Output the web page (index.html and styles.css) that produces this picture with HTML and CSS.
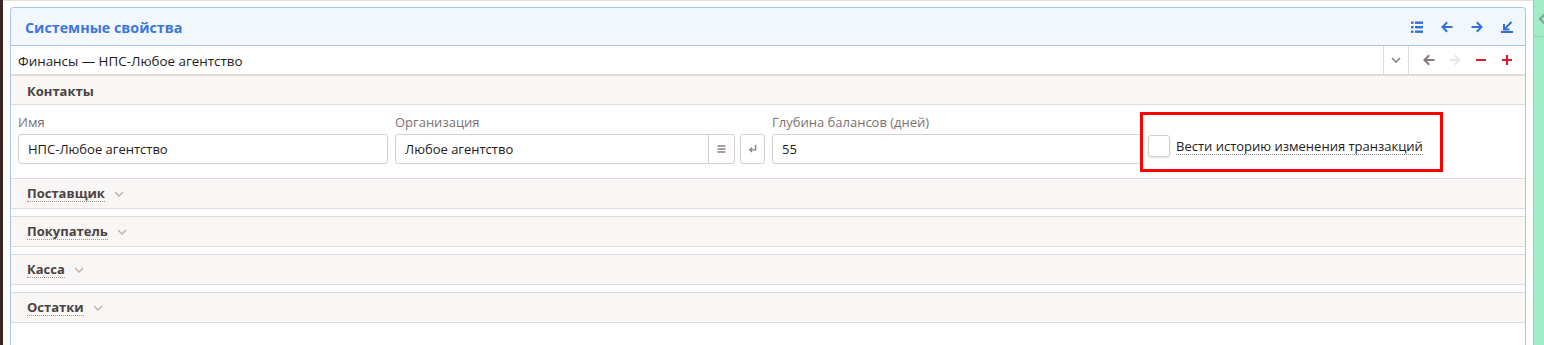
FILE: index.html
```html
<!DOCTYPE html>
<html lang="ru">
<head>
<meta charset="utf-8">
<title>Системные свойства</title>
<link rel="stylesheet" href="styles.css">
</head>
<body>
<div class="screen">
  <div class="edge"></div>
  <div class="workspace">
    <div class="panel">
      <div class="panel-head">
        <h1 class="panel-title">Системные свойства</h1>
        <div class="head-tools">
          <svg class="ico blue" viewBox="0 0 12 12"><rect x="0" y="0.5" width="2.5" height="2.4"/><rect x="4" y="0.5" width="8" height="2.4"/><rect x="0" y="5" width="2.5" height="2.4"/><rect x="4" y="5" width="8" height="2.4"/><rect x="0" y="9.5" width="2.5" height="2.4"/><rect x="4" y="9.5" width="8" height="2.4"/></svg>
          <svg class="ico blue-s" viewBox="0 0 12 12"><path d="M11.5 6H1.5M6.2 1.3 1.5 6l4.7 4.7"/></svg>
          <svg class="ico blue-s" viewBox="0 0 12 12"><path d="M0.5 6h10M5.8 1.3 10.5 6l-4.7 4.7"/></svg>
          <svg class="ico blue-s" viewBox="0 0 12 12"><path d="M10.5 1 3 8.5M3 3v5.5h5.5M0 11h12"/></svg>
        </div>
      </div>

      <div class="record-bar">
        <div class="record-name">Финансы — НПС-Любое агентство</div>
        <div class="rb-drop">
          <svg class="chev" viewBox="0 0 10 6"><path d="M1 1l4 4 4-4"/></svg>
        </div>
        <div class="rb-nav">
          <svg class="ico gray-s" viewBox="0 0 12 12"><path d="M11.5 6H1.5M6.2 1.3 1.5 6l4.7 4.7"/></svg>
          <svg class="ico faint-s" viewBox="0 0 12 12"><path d="M0.5 6h10M5.8 1.3 10.5 6l-4.7 4.7"/></svg>
          <svg class="ico red-s" viewBox="0 0 12 12"><path d="M1 6h10"/></svg>
          <svg class="ico red-s" viewBox="0 0 12 12"><path d="M1 6h10M6 1v10"/></svg>
        </div>
      </div>

      <div class="group group-open">
        <div class="group-head"><span class="group-title plain">Контакты</span></div>
        <div class="form">
          <div class="field">
            <label class="field-label">Имя</label>
            <div class="input"><span>НПС-Любое агентство</span></div>
          </div>
          <div class="field">
            <label class="field-label">Организация</label>
            <div class="field-row">
              <div class="input input-grow">
                <span>Любое агентство</span>
                <span class="input-addon">
                  <svg class="mini" viewBox="0 0 8 8"><path d="M0 1h8M0 4h8M0 7h8"/></svg>
                </span>
              </div>
              <div class="btn-sq">
                <svg class="mini" viewBox="0 0 10 9"><path d="M8.5 0v5.5H2M4.5 3 2 5.5 4.5 8"/></svg>
              </div>
            </div>
          </div>
          <div class="field">
            <label class="field-label">Глубина балансов (дней)</label>
            <div class="input"><span>55</span></div>
          </div>
          <div class="field field-check">
            <div class="check-row">
              <span class="checkbox"></span>
              <span class="check-label">Вести историю изменения транзакций</span>
            </div>
          </div>
          <div class="highlight"></div>
        </div>
      </div>

      <div class="group group-closed first">
        <div class="group-head"><span class="group-title">Поставщик</span><svg class="sec-chev" viewBox="0 0 10 6"><path d="M1 1l4 4 4-4"/></svg></div>
      </div>
      <div class="group group-closed">
        <div class="group-head"><span class="group-title">Покупатель</span><svg class="sec-chev" viewBox="0 0 10 6"><path d="M1 1l4 4 4-4"/></svg></div>
      </div>
      <div class="group group-closed">
        <div class="group-head"><span class="group-title">Касса</span><svg class="sec-chev" viewBox="0 0 10 6"><path d="M1 1l4 4 4-4"/></svg></div>
      </div>
      <div class="group group-closed">
        <div class="group-head"><span class="group-title">Остатки</span><svg class="sec-chev" viewBox="0 0 10 6"><path d="M1 1l4 4 4-4"/></svg></div>
      </div>
    </div>
  </div>
  <div class="side">
    <div class="side-top">
      <svg class="side-chev" viewBox="0 0 8 12"><path d="M7 1 2 6l5 5"/></svg>
    </div>
  </div>
</div>
</body>
</html>
```

FILE: styles.css
```css
* { box-sizing: border-box; }
html, body { margin: 0; padding: 0; background: #fff; }
body {
  font-family: "Open Sans", "Noto Sans", sans-serif;
  font-size: 13px;
  color: #2a2222;
}
.screen {
  display: flex;
  height: 345px;
  overflow: hidden;
}
.edge { width: 3px; background: #3b2424; flex: none; }
.workspace {
  flex: 1;
  display: flex;
  flex-direction: column;
  padding: 6px 7px 0 7px;
  border-top: 1px solid #e6e1e1;
}
.panel {
  flex: 1;
  border: 1px solid #a9c6f4;
  border-bottom: none;
  border-radius: 4px 4px 0 0;
  display: flex;
  flex-direction: column;
  background: #fff;
}
.panel-head {
  height: 38px;
  flex: none;
  background: #f2f6fd;
  border-bottom: 1px solid #a9c6f4;
  border-radius: 4px 4px 0 0;
  display: flex;
  align-items: center;
  padding: 1px 12px 0 14px;
}
.panel-title {
  margin: 0;
  flex: 1;
  font-size: 14.3px;
  font-weight: 700;
  color: #3a78dc;
}
.head-tools { display: flex; gap: 18px; align-items: center; }
.ico { width: 12px; height: 12px; display: block; overflow: visible; }
.blue { fill: #2f6fdd; }
.blue-s, .gray-s, .faint-s, .red-s { fill: none; stroke-width: 2; }
.blue-s { stroke: #2f6fdd; }
.gray-s { stroke: #867b7b; }
.faint-s { stroke: #ebe7e7; }
.red-s { stroke: #e2182a; }

.record-bar {
  height: 30px;
  flex: none;
  display: flex;
  align-items: stretch;
  border-bottom: 2px solid #e2d9d9;
}
.record-name {
  flex: 1;
  display: flex;
  align-items: center;
  padding: 1px 0 0 7px;
  font-size: 13.4px;
  color: #231b1b;
}
.rb-drop {
  width: 26px;
  border-left: 1px solid #e0d8d8;
  border-right: 1px solid #e0d8d8;
  display: flex;
  align-items: center;
  justify-content: center;
}
.chev { width: 10px; height: 6px; fill: none; stroke: #8c8282; stroke-width: 1.6; }
.rb-nav {
  display: flex;
  align-items: center;
  gap: 14px;
  padding: 0 12px 0 14px;
}

.group-head {
  display: flex;
  align-items: center;
  padding-left: 16px;
  background: #f9f6f6;
}
.group-open .group-head {
  height: 29px;
  padding-top: 1px;
  border-bottom: 1px solid #e2d9d9;
}
.group-title {
  font-weight: 700;
  color: #4b4343;
  border-bottom: 1px dotted #9a9494;
  line-height: 16px;
}
.group-title.plain { border-bottom: none; }
.sec-chev { width: 10px; height: 6px; margin-left: 9px; fill: none; stroke: #bbb5ab; stroke-width: 1.5; }

.form {
  position: relative;
  display: grid;
  grid-template-columns: repeat(4, 1fr);
  column-gap: 7px;
  padding: 8px 6px 14px 7px;
  border-bottom: 1px solid #e2d9d9;
}
.field { display: flex; flex-direction: column; }
.field-label {
  height: 18px;
  line-height: 18px;
  margin-bottom: 3px;
  color: #7a7272;
}
.input {
  height: 30px;
  border: 1px solid #d6cfcf;
  border-radius: 3px;
  display: flex;
  align-items: center;
  padding-left: 9px;
  color: #231b1b;
  background: #fff;
}
.field-row { display: flex; gap: 5px; }
.input-grow { flex: 1; }
.input-grow span:first-child { flex: 1; }
.input-addon {
  width: 26px;
  align-self: stretch;
  border-left: 1px solid #d6cfcf;
  display: flex;
  align-items: center;
  justify-content: center;
}
.btn-sq {
  width: 25px;
  height: 30px;
  border: 1px solid #d6cfcf;
  border-radius: 3px;
  display: flex;
  align-items: center;
  justify-content: center;
}
.mini { width: 9px; height: 8px; fill: none; stroke: #8a8080; stroke-width: 1.6; overflow: visible; }
.field-check { padding-top: 21px; }
.check-row { height: 24px; display: flex; align-items: center; gap: 6px; margin-left: -1px; }
.checkbox {
  width: 22px;
  height: 22px;
  border: 1px solid #d3cdcd;
  border-radius: 3px;
  box-shadow: 0 1px 2px rgba(0,0,0,0.12);
  background: #fff;
}
.check-label {
  color: #231b1b;
  border-bottom: 1px dotted #8a8484;
  line-height: 16px;
}
.highlight {
  position: absolute;
  left: 1129px;
  top: 7px;
  width: 303px;
  height: 60px;
  border: 3px solid #ff0000;
  pointer-events: none;
}

.group-closed .group-head {
  height: 31px;
  border-top: 1px solid #e2d9d9;
  border-bottom: 1px solid #e2d9d9;
  margin-top: 7px;
}
.group-closed.first .group-head {
  height: 30px;
  border-top: none;
  margin-top: 0;
}

.side {
  width: 11px;
  flex: none;
  background: #a2edc9;
  border-left: 1px solid #8fd7b3;
}
.side-top {
  height: 37px;
  border-bottom: 1px solid #8fd3b0;
  padding: 13px 0 0 4px;
}
.side-chev { width: 8px; height: 12px; fill: none; stroke: #7fa893; stroke-width: 2.2; display: block; }
```
